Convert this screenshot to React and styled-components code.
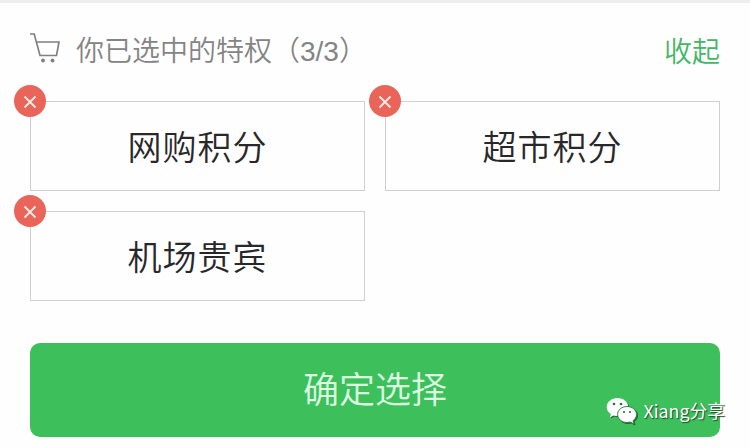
import React from "react";
import styled, { createGlobalStyle } from "styled-components";

const GlobalStyle = createGlobalStyle`
  * { box-sizing: border-box; }
  body {
    margin: 0;
    background: #fefefe;
    font-family: "Liberation Sans", "Noto Sans CJK SC", sans-serif;
  }
`;

const Panel = styled.main`
  position: relative;
  display: flex;
  flex-direction: column;
  height: 448px;
  padding: 0 30px;
  overflow: hidden;
  border-top: 3px solid #ededed;
`;

const Header = styled.header`
  display: flex;
  align-items: center;
  height: 98px;
  padding-bottom: 2px;
`;

const CartIcon = styled.svg`
  flex: none;
  width: 32px;
  height: 32px;
  margin-right: 14px;
  margin-top: -6px;
`;

const Title = styled.h1`
  flex: 1;
  margin: 0;
  padding-top: 2px;
  font-size: 28px;
  font-weight: 350;
  line-height: 40px;
  color: #848484;
`;

const Toggle = styled.button`
  padding: 0 0 2px;
  border: 0;
  background: none;
  font: 350 28px/40px "Noto Sans CJK SC", sans-serif;
  color: #45b668;
`;

const Grid = styled.ul`
  display: grid;
  grid-template-columns: repeat(2, 335px);
  grid-auto-rows: 90px;
  gap: 20px;
  margin: 0;
  padding: 0;
  list-style: none;
`;

const Card = styled.li`
  position: relative;
  display: flex;
  align-items: center;
  justify-content: center;
  border: 1px solid #d0d0d0;
  padding: 4px 0 0;
  font-size: 34px;
  font-weight: 350;
  letter-spacing: 1px;
  line-height: 50px;
  color: #28282a;
`;

const RemoveButton = styled.button`
  position: absolute;
  top: -17px;
  left: -17px;
  width: 32px;
  height: 32px;
  padding: 0;
  border: 0;
  border-radius: 50%;
  background: #e9655a;

  svg { display: block; width: 32px; height: 32px; }
`;

const Confirm = styled.button`
  height: 94px;
  margin-top: 42px;
  padding: 0 0 7px;
  border: 0;
  border-radius: 10px;
  background: #3dbf5b;
  font: 350 36px/52px "Noto Sans CJK SC", sans-serif;
  color: #dcffe2;
`;

const Watermark = styled.div`
  position: absolute;
  right: 25px;
  bottom: 20px;
  display: flex;
  align-items: center;
  gap: 6px;
  font: 400 17.8px/32px "Noto Sans CJK SC", sans-serif;
  color: #fff;
  text-shadow: 1px 1px 1px #234a2d;

  span { padding-bottom: 2px; }

  svg {
    width: 31px;
    height: 28px;
    filter: drop-shadow(1px 1px 0.5px #23602f);
  }
`;

const privileges = ["网购积分", "超市积分", "机场贵宾"];

function Cart() {
  return (
    <CartIcon viewBox="0 0 32 32" fill="none" stroke="#808080" strokeWidth="1.7">
      <path d="M0 2H4.200L10 23.500H26.500L29 10H6.500" />
      <circle cx="13" cy="28.500" r="1.900" fill="#808080" stroke="none" />
      <circle cx="22.500" cy="28.500" r="1.900" fill="#808080" stroke="none" />
    </CartIcon>
  );
}

function Remove({ name }) {
  return (
    <RemoveButton aria-label={`移除${name}`}>
      <svg viewBox="0 0 32 32" fill="none" stroke="#ffe9e4" strokeWidth="1.9">
        <path d="M10.500 11.500L21.500 22.500M21.500 11.500L10.500 22.500" />
      </svg>
    </RemoveButton>
  );
}

function WeChat() {
  return (
    <svg viewBox="0 0 31 28">
      <path
        fill="#fff"
        d="M11.5 1C5.4 1 .7 5 .7 10c0 3 1.6 5.500 4.200 7.200L3.700 20.500l4-2c1.300.4 2.500.5 3.800.5 6 0 10.800-4 10.800-9S17.500 1 11.500 1Z"
      />
      <path
        fill="#fff"
        stroke="#2f8446"
        strokeWidth="1"
        d="M21 9.500c-5.200 0-9.400 3.500-9.400 8s4.200 8 9.400 8c1.200 0 2.300-.2 3.300-.5l3.700 2-1-3.300c2.200-1.500 3.500-3.700 3.500-6.200 0-4.500-4.300-8-9.500-8Z"
      />
      <g fill="#2d6f3e">
        <circle cx="8" cy="7" r="1.300" />
        <circle cx="15" cy="7" r="1.300" />
        <circle cx="18" cy="15" r="1.100" />
        <circle cx="24" cy="15" r="1.100" />
      </g>
    </svg>
  );
}

export default function App() {
  return (
    <>
      <GlobalStyle />
      <Panel>
        <Header>
          <Cart />
          <Title>你已选中的特权（3/3）</Title>
          <Toggle>收起</Toggle>
        </Header>
        <Grid>
          {privileges.map((name) => (
            <Card key={name}>
              {name}
              <Remove name={name} />
            </Card>
          ))}
        </Grid>
        <Confirm>确定选择</Confirm>
        <Watermark>
          <WeChat />
          <span>Xiang分享</span>
        </Watermark>
      </Panel>
    </>
  );
}
